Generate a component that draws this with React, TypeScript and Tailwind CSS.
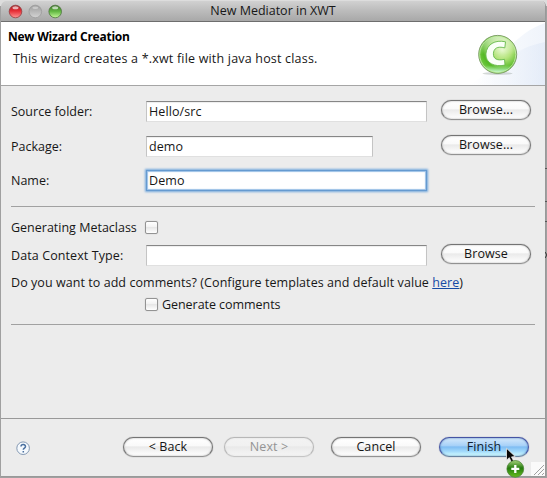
import type { ReactNode } from "react";

function PushButton({ children, kind = "normal" }: { children: ReactNode; kind?: "normal" | "disabled" | "primary" }) {
  const looks = {
    normal:
      "border-[#747474] border-b-[#929292] text-[#151515] bg-[linear-gradient(#ffffff,#fafafa_42%,#eaeaea_50%,#f5f5f5_75%,#ffffff)] shadow-[0_0_1px_#777,inset_0_0_2px_#aaa]",
    disabled:
      "border-[#b7b7b7] border-b-[#c5c5c5] text-[#949494] bg-[linear-gradient(#f3f3f3,#f1f1f1_42%,#e9e9e9_50%,#f0f0f0_75%,#f4f4f4)] shadow-[0_0_1px_#c4c4c4,inset_0_0_2px_#ddd]",
    primary:
      "border-[#4554a4] border-b-[#68839f] text-[#101d30] bg-[linear-gradient(#d5e9fb,#a7d1f8_42%,#7fbdf3_50%,#a3dafb_75%,#d6ffff)] shadow-[0_0_1px_#59709a,inset_0_0_2px_#4977b0]",
  };
  return (
    <button className={`flex h-5 w-[90px] shrink-0 items-center justify-center rounded-full border pb-px text-[12.5px] leading-4 tracking-[0.1px] ${looks[kind]}`}>
      {children}
    </button>
  );
}

function Field({ value, narrow = false, focused = false }: { value: string; narrow?: boolean; focused?: boolean }) {
  return (
    <div
      className={`flex h-[21px] shrink-0 items-center border bg-white pl-[2px] pt-px text-[12.5px] tracking-[0.1px] ${narrow ? "w-[227px]" : "w-[281px]"} ${
        focused
          ? "border-[#659ad0] shadow-[0_0_2px_1px_#75a9dc,inset_0_0_1px_1px_#9bc0e6]"
          : "border-x-[#c4c4c4] border-t-[#868686] border-b-[#e0e0e0] shadow-[inset_0_1px_1px_#eeeeee]"
      }`}
    >
      {value}
    </div>
  );
}

function Checkbox() {
  return (
    <span className="block size-[13px] shrink-0 rounded-[2px] border border-[#939393] bg-[linear-gradient(#ffffff,#f2f2f2_45%,#e7e7e7_50%,#ffffff)] shadow-[0_0_1px_#aaa]" />
  );
}

function ClassIcon() {
  return (
    <svg className="h-[63px] w-[76px]" viewBox="0 0 76 63">
      <defs>
        <linearGradient id="sky" x1="0" x2="1">
          <stop offset="0" stopColor="#fff" />
          <stop offset="1" stopColor="#dce6f6" />
        </linearGradient>
        <radialGradient id="orb" cx="0.62" cy="0.38" r="0.7">
          <stop offset="0" stopColor="#e4f8c9" />
          <stop offset="0.35" stopColor="#b4e47c" />
          <stop offset="0.72" stopColor="#55b925" />
          <stop offset="1" stopColor="#7bd04b" />
        </radialGradient>
        <linearGradient id="gloss" x1="0" y1="0" x2="0" y2="1">
          <stop offset="0" stopColor="#fff" stopOpacity="0.6" />
          <stop offset="0.5" stopColor="#fff" stopOpacity="0" />
          <stop offset="0.8" stopColor="#c7ffd2" stopOpacity="0" />
          <stop offset="1" stopColor="#d3ffe5" stopOpacity="0.9" />
        </linearGradient>
      </defs>
      <path d="M0 63C26 50 40 13 76 1V63Z" fill="url(#sky)" opacity="0.45" />
      <path d="M5 63C26 48 43 26 76 20V63Z" fill="url(#sky)" opacity="0.55" />
      <ellipse cx="28.5" cy="51.5" rx="15" ry="1.4" fill="#59695e" opacity="0.24" />
      <circle cx="28.7" cy="32.4" r="19" fill="url(#orb)" stroke="#819f6c" strokeWidth="1" />
      <circle cx="28.7" cy="32.4" r="18" fill="url(#gloss)" stroke="#c8edaa" strokeWidth="0.8" />
      <path
        d="M36.5 19.8C26 17.4 17.6 22.4 16.9 32C16.5 41 25.3 45.3 36 43.1L35.5 37.3C28.4 39 24.2 37 24.4 31.8C24.6 26.5 28.2 23.8 35.8 25.9Z"
        fill="#f9fff7"
        stroke="#67b94b"
        strokeWidth="0.9"
      />
    </svg>
  );
}

function TrafficLights() {
  return (
    <svg className="h-[20px] w-[66px]" viewBox="0 0 66 20">
      <defs>
        <linearGradient id="redLight" x1="0" y1="0" x2="0" y2="1">
          <stop offset="0" stopColor="#a12023" /><stop offset="0.45" stopColor="#e72d35" /><stop offset="1" stopColor="#ff9795" />
        </linearGradient>
        <linearGradient id="grayLight" x1="0" y1="0" x2="0" y2="1">
          <stop offset="0" stopColor="#9d9d9d" /><stop offset="0.5" stopColor="#b8b8b8" /><stop offset="1" stopColor="#d4d4d4" />
        </linearGradient>
        <linearGradient id="greenLight" x1="0" y1="0" x2="0" y2="1">
          <stop offset="0" stopColor="#3d7429" /><stop offset="0.5" stopColor="#64b944" /><stop offset="1" stopColor="#c6f99b" />
        </linearGradient>
      </defs>
      <circle cx="14.5" cy="10.5" r="6.3" fill="url(#redLight)" stroke="#923e41" strokeWidth="0.8" />
      <circle cx="34.3" cy="10.5" r="6.3" fill="url(#grayLight)" stroke="#9b9b9b" strokeWidth="0.8" />
      <circle cx="54.2" cy="10.5" r="6.3" fill="url(#greenLight)" stroke="#4b723e" strokeWidth="0.8" />
      <g fill="#fff" opacity="0.65">
        <ellipse cx="14.5" cy="6.8" rx="3" ry="1.5" /><ellipse cx="34.3" cy="6.8" rx="3" ry="1.3" opacity="0.6" /><ellipse cx="54.2" cy="6.8" rx="3" ry="1.5" />
      </g>
    </svg>
  );
}

function CopyCursor() {
  return (
    <svg className="absolute left-[504px] top-[446px] h-8 w-6" viewBox="0 0 24 32">
      <defs>
        <linearGradient id="copyBadge" x1="0" y1="0" x2="0" y2="1">
          <stop offset="0" stopColor="#a6d17c" /><stop offset="0.45" stopColor="#247b0d" /><stop offset="1" stopColor="#69be21" />
        </linearGradient>
      </defs>
      <path d="M2.5 2.3V14.2L5.3 11.7L7.8 17L10.1 15.8L7.5 10.9L11.2 10.5Z" fill="#080808" stroke="#eeeeee" strokeWidth="0.8" />
      <circle cx="11.3" cy="22.9" r="8.4" fill="url(#copyBadge)" stroke="#447c2e" strokeWidth="0.7" />
      <path d="M11.3 18.9v8M7.3 22.9h8" stroke="white" strokeWidth="2.3" />
    </svg>
  );
}

export default function App() {
  return (
    <main className="relative h-[478px] w-[547px] overflow-hidden bg-[#a0a0a0] bg-[linear-gradient(#dddddd,#dddddd)] bg-[length:100%_6px] bg-no-repeat pl-px pt-px font-['Open_Sans','Noto_Sans',sans-serif] text-[12.5px] leading-4 text-[#171717]">
      <section className="flex h-[476px] w-[545px] flex-col overflow-hidden rounded-t-[5px] border-r border-b border-[#999] bg-[#ececec]">
        <header className="grid h-[21px] shrink-0 grid-cols-[66px_1fr_66px] items-center border-b border-[#6e6e6e] bg-[linear-gradient(#d1d1d1,#bdbdbd_45%,#a8a8a8)]">
          <TrafficLights />
          <h1 className="text-center text-[12.5px] leading-4">New Mediator in XWT</h1>
        </header>
        <div className="flex h-[64px] shrink-0 justify-between border-b border-[#a5a5a5] bg-white">
          <div className="pl-[7px] pt-[6px]">
            <h2 className="text-[12px] font-bold leading-[17px] tracking-[-0.25px] text-black">New Wizard Creation</h2>
            <p className="pl-[5px] pt-[6px] leading-4 tracking-[0.19px]">This wizard creates a *.xwt file with java host class.</p>
          </div>
          <ClassIcon />
        </div>
        <div className="flex h-[332px] shrink-0 flex-col px-[10px] pt-[14px]">
          <div className="flex h-[35px] items-start"><label className="w-[135px] pt-[4px]">Source folder:</label><div className="pt-px"><Field value="Hello/src" /></div><span className="w-[14px]" /><PushButton>Browse...</PushButton></div>
          <div className="flex h-[34px] items-start"><label className="w-[135px] pt-[4px]">Package:</label><div className="pt-px"><Field value="demo" narrow /></div><span className="w-[68px]" /><PushButton>Browse...</PushButton></div>
          <div className="flex h-[37px] items-start"><label className="w-[135px] pt-[4px]">Name:</label><div className="pt-px"><Field value="Demo" focused /></div></div>
          <hr className="border-[#a1a1a1]" />
          <div className="flex h-[37px] items-center pt-[4px]"><label className="w-[134px]">Generating Metaclass</label><Checkbox /></div>
          <div className="flex h-[30px] items-start"><label className="w-[135px] pt-[4px] tracking-[0.1px]">Data Context Type:</label><div className="pt-px"><Field value="" /></div><span className="w-[14px]" /><PushButton>Browse</PushButton></div>
          <p className="h-[23px] whitespace-nowrap pt-px tracking-[0.06px]">Do you want to add comments? (Configure templates and default value <a className="text-[#174ba5] underline">here</a>)</p>
          <div className="flex h-[27px] items-start pl-[134px]"><div className="pt-px"><Checkbox /></div><label className="pl-[4px] tracking-[-0.05px]">Generate comments</label></div>
          <hr className="border-[#a1a1a1]" />
        </div>
        <footer className="flex grow items-start border-t border-[#999] pl-[15px] pt-[18px]">
          <svg className="mt-[4px] size-[15px]" viewBox="0 0 15 15" fill="none">
            <circle cx="7.1" cy="7.2" r="6.3" fill="#f5f9fd" stroke="#8398b2" />
            <path d="M5 5.5C5.1 2.8 9.7 3 9.5 5.6C9.4 7.1 7.3 7.1 7.3 8.8M7.3 10.1V11.6" stroke="#496f9f" strokeWidth="1.5" />
          </svg>
          <div className="flex pl-[92px]"><PushButton>&lt; Back</PushButton><span className="w-[11px]" /><PushButton kind="disabled">Next &gt;</PushButton><span className="w-[17px]" /><PushButton>Cancel</PushButton><span className="w-[18px]" /><PushButton kind="primary">Finish</PushButton></div>
        </footer>
      </section>
      <svg className="absolute bottom-[2px] right-[2px] size-[14px] bg-[#fafafa]" viewBox="0 0 14 14"><path d="M3 13L13 3M7 13L13 7M11 13L13 11" stroke="#a0a0a0" /></svg>
      <svg className="absolute right-0 top-[160px] h-[102px] w-[2px]" viewBox="0 0 2 102" stroke="#333" fill="none">
        <path d="M0 8.5h2M0 41.5h2M0 61.5h2" stroke="#555" />
        <path d="M0 92L2 95L0 98" />
      </svg>
      <CopyCursor />
    </main>
  );
}
